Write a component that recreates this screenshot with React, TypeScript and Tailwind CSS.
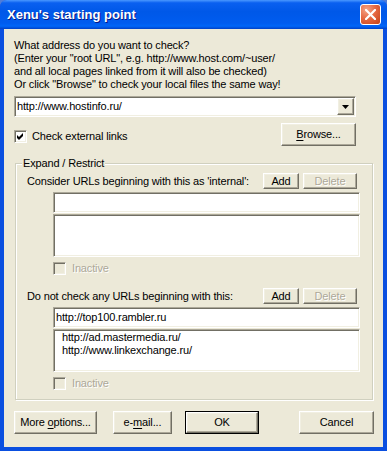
import React from "react";

const raised =
  "border border-t-white border-l-white border-r-[#716F64] border-b-[#716F64] shadow-[inset_-1px_-1px_0_#ACA899,inset_1px_1px_0_#F1EFE2] bg-[#ECE9D8]";
const sunken =
  "border border-t-[#ACA899] border-l-[#ACA899] border-r-white border-b-white shadow-[inset_1px_1px_0_#716F64,inset_-1px_-1px_0_#F1EFE2] p-[1px]";
const disabledText = "text-[#ACA899] [text-shadow:1px_1px_0_#ffffff]";

function Btn({ w, h = 23, children, disabled }: { w: number; h?: number; children: React.ReactNode; disabled?: boolean }) {
  return (
    <div
      className={`${raised} flex items-center justify-center ${disabled ? disabledText : "text-black"}`}
      style={{ width: w, height: h }}
    >
      {children}
    </div>
  );
}

function Check({ checked, disabled }: { checked?: boolean; disabled?: boolean }) {
  return (
    <div className={`${sunken} w-[13px] h-[13px] shrink-0 ${disabled ? "bg-[#ECE9D8]" : "bg-white"}`}>
      {checked && (
        <svg width="9" height="9" viewBox="0 0 9 9" className="block">
          <path d="M1 3 L3 5 L7 1 L7 4 L3 8 L1 6 Z" fill="#000" />
        </svg>
      )}
    </div>
  );
}

function Section({ label, edit, items }: { label: string; edit: string; items: string[] }) {
  return (
    <div className="flex flex-col">
      <div className="flex items-center justify-between h-[16px] pl-[11px] pr-[15px]">
        <span>{label}</span>
        <div className="flex gap-[4px]">
          <Btn w={36} h={16}>Add</Btn>
          <Btn w={54} h={16} disabled>Delete</Btn>
        </div>
      </div>
      <div className="ml-[37px] mt-[3px] w-[307px] flex flex-col">
        <div className={`${sunken} bg-white h-[21px] flex items-center pl-[1px]`}>
          <span className="pl-[1px]">{edit}</span>
        </div>
        <div className={`${sunken} bg-white h-[43px] mt-[1px] flex flex-col pl-[8px] pt-[1px]`}>
          {items.map((t) => (
            <span key={t}>{t}</span>
          ))}
        </div>
        <div className="flex items-center gap-[6px] mt-[5px] h-[13px]">
          <Check disabled />
          <span className={disabledText}>Inactive</span>
        </div>
      </div>
    </div>
  );
}

export default function App() {
  return (
    <div className="w-[387px] h-[451px] bg-[#4F7CD8] font-['Liberation_Sans',Arial,sans-serif] text-[11px] leading-[13px] text-black">
      <div className="w-full h-full flex flex-col rounded-t-[7px] overflow-hidden bg-[#0A4FE0]">
        <div className="h-[29px] shrink-0 flex items-center justify-between pl-[7px] pr-[6px] bg-[linear-gradient(180deg,#4a98ff,#0a60f0_10%,#0058e8_40%,#005cef_80%,#0066f8_90%,#0050dc_96%,#0040c4)]">
          <span className="text-white font-bold text-[13px] leading-[16px] mt-[1px] [text-shadow:1px_1px_0_#0a1883]">
            Xenu's starting point
          </span>
          <div className="w-[21px] h-[21px] rounded-[3px] border border-white bg-[radial-gradient(circle_at_30%_25%,#f4a487,#e66a44_45%,#d14f26_80%,#bf4218)] flex items-center justify-center">
            <svg width="11" height="11" viewBox="0 0 11 11">
              <path d="M1 1 L10 10 M10 1 L1 10" stroke="#ffffff" strokeWidth="2.2" strokeLinecap="square" />
            </svg>
          </div>
        </div>
        <div className="flex-1 mx-[4px] mb-[4px] bg-[#ECE9D8] pl-[10px] pt-[10px] flex flex-col tracking-[-0.15px]">
          <div className="flex flex-col">
            <span>What address do you want to check?</span>
            <span>(Enter your "root URL", e.g. http://www.host.com/~user/</span>
            <span>and all local pages linked from it will also be checked)</span>
            <span>Or click "Browse" to check your local files the same way!</span>
          </div>
          <div className={`${sunken} bg-white w-[342px] h-[21px] mt-[5px] flex items-center`}>
            <span className="pl-[1px] flex-1">http://www.hostinfo.ru/</span>
            <div className={`${raised} w-[17px] h-[17px] flex items-center justify-center`}>
              <svg width="7" height="4" viewBox="0 0 7 4">
                <path d="M0 0 H7 L3.5 4 Z" fill="#000" />
              </svg>
            </div>
          </div>
          <div className="w-[342px] h-[23px] mt-[6px] flex items-start justify-between">
            <div className="flex items-center gap-[5px] mt-[7px]">
              <Check checked />
              <span>Check external links</span>
            </div>
            <Btn w={75}>
              <span>
                <span className="underline underline-offset-[2px]">B</span>rowse...
              </span>
            </Btn>
          </div>
          <div className="relative ml-[1px] mt-[17px] w-[358px] h-[237px] border border-[#D0D0BF] shadow-[inset_1px_1px_0_#ffffff,1px_1px_0_#ffffff] pt-[9px] flex flex-col">
            <span className="absolute left-[6px] top-[-7px] px-[1px] bg-[#ECE9D8]">Expand / Restrict</span>
            <Section label="Consider URLs beginning with this as 'internal':" edit="" items={[]} />
            <div className="mt-[13px]">
              <Section
                label="Do not check any URLs beginning with this:"
                edit="http://top100.rambler.ru"
                items={["http://ad.mastermedia.ru/", "http://www.linkexchange.ru/"]}
              />
            </div>
          </div>
          <div className="flex mt-[11px]">
            <Btn w={83}>
              <span>
                More <span className="underline underline-offset-[2px]">o</span>ptions...
              </span>
            </Btn>
            <div className="ml-[16px]">
              <Btn w={59}>
                <span>
                  e-<span className="underline underline-offset-[2px]">m</span>ail...
                </span>
              </Btn>
            </div>
            <div className="ml-[13px] w-[74px] h-[23px] border border-black">
              <div className={`${raised} w-full h-full flex items-center justify-center`}>OK</div>
            </div>
            <div className="ml-[40px]">
              <Btn w={75}>Cancel</Btn>
            </div>
          </div>
        </div>
      </div>
    </div>
  );
}
